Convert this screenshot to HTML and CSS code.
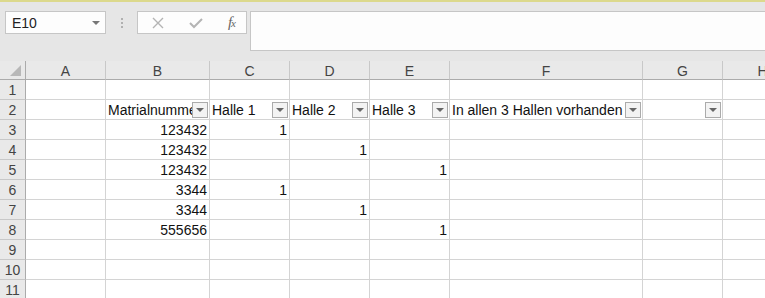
FILE: index.html
```html
<!DOCTYPE html>
<html lang="de">
<head>
  <meta charset="UTF-8">
  <title>Mappe1 - Excel</title>
  <link rel="stylesheet" href="styles.css">
</head>
<body>

  <!-- Formula bar -->
  <div class="toolbar">
    <div class="name-box">
      <span>E10</span>
      <span class="caret"></span>
    </div>
    <div class="grip"><i></i><i></i><i></i></div>
    <div class="fx-buttons">
      <svg width="14" height="14" viewBox="0 0 14 14"><path d="M2 2 L12 12 M12 2 L2 12" stroke="#b4b4b4" stroke-width="1.4" fill="none"/></svg>
      <svg width="16" height="14" viewBox="0 0 16 14"><path d="M2 7 L6 11 L14 3" stroke="#b4b4b4" stroke-width="2" fill="none"/></svg>
      <span class="fx">f<small>x</small></span>
    </div>
    <div class="formula"></div>
  </div>

  <!-- Sheet -->
  <div class="sheet">
    <div class="corner"><span class="tri"></span></div>
    <div class="colhead">A</div>
    <div class="colhead">B</div>
    <div class="colhead">C</div>
    <div class="colhead">D</div>
    <div class="colhead">E</div>
    <div class="colhead">F</div>
    <div class="colhead">G</div>
    <div class="colhead">H</div>

    <div class="rowhead">1</div>
    <div class="cell"></div><div class="cell"></div><div class="cell"></div><div class="cell"></div><div class="cell"></div><div class="cell"></div><div class="cell"></div><div class="cell"></div>

    <div class="rowhead">2</div>
    <div class="cell"></div>
    <div class="cell filter">Matrialnummer<span class="drop"></span></div>
    <div class="cell filter">Halle 1<span class="drop"></span></div>
    <div class="cell filter">Halle 2<span class="drop"></span></div>
    <div class="cell filter">Halle 3<span class="drop"></span></div>
    <div class="cell filter">In allen 3 Hallen vorhanden<span class="drop"></span></div>
    <div class="cell filter"><span class="drop"></span></div>
    <div class="cell"></div>

    <div class="rowhead">3</div>
    <div class="cell"></div><div class="cell num">123432</div><div class="cell num">1</div><div class="cell"></div><div class="cell"></div><div class="cell"></div><div class="cell"></div><div class="cell"></div>

    <div class="rowhead">4</div>
    <div class="cell"></div><div class="cell num">123432</div><div class="cell"></div><div class="cell num">1</div><div class="cell"></div><div class="cell"></div><div class="cell"></div><div class="cell"></div>

    <div class="rowhead">5</div>
    <div class="cell"></div><div class="cell num">123432</div><div class="cell"></div><div class="cell"></div><div class="cell num">1</div><div class="cell"></div><div class="cell"></div><div class="cell"></div>

    <div class="rowhead">6</div>
    <div class="cell"></div><div class="cell num">3344</div><div class="cell num">1</div><div class="cell"></div><div class="cell"></div><div class="cell"></div><div class="cell"></div><div class="cell"></div>

    <div class="rowhead">7</div>
    <div class="cell"></div><div class="cell num">3344</div><div class="cell"></div><div class="cell num">1</div><div class="cell"></div><div class="cell"></div><div class="cell"></div><div class="cell"></div>

    <div class="rowhead">8</div>
    <div class="cell"></div><div class="cell num">555656</div><div class="cell"></div><div class="cell"></div><div class="cell num">1</div><div class="cell"></div><div class="cell"></div><div class="cell"></div>

    <div class="rowhead">9</div>
    <div class="cell"></div><div class="cell"></div><div class="cell"></div><div class="cell"></div><div class="cell"></div><div class="cell"></div><div class="cell"></div><div class="cell"></div>

    <div class="rowhead">10</div>
    <div class="cell"></div><div class="cell"></div><div class="cell"></div><div class="cell"></div><div class="cell"></div><div class="cell"></div><div class="cell"></div><div class="cell"></div>

    <div class="rowhead">11</div>
    <div class="cell"></div><div class="cell"></div><div class="cell"></div><div class="cell"></div><div class="cell"></div><div class="cell"></div><div class="cell"></div><div class="cell"></div>
  </div>

</body>
</html>
```

FILE: styles.css
```css
body {
  margin: 0;
  font-family: "Liberation Sans", Arial, sans-serif;
  background: #ffffff;
  overflow: hidden;
}
.toolbar {
  height: 61px;
  box-sizing: border-box;
  background: #e6e6e6;
  border-top: 2px solid #dcd98c;
  display: flex;
  align-items: flex-start;
  padding: 9px 0 0 5px;
}
.name-box {
  width: 101px;
  height: 23px;
  box-sizing: border-box;
  background: #fdfdfd;
  border: 1px solid #c6c6c6;
  display: flex;
  align-items: center;
  justify-content: space-between;
  padding: 0 5px 0 6px;
  font-size: 14px;
  color: #222;
}
.caret {
  width: 0;
  height: 0;
  border-left: 4px solid transparent;
  border-right: 4px solid transparent;
  border-top: 4px solid #777;
  margin-top: 1px;
}
.grip {
  width: 31px;
  height: 23px;
  display: flex;
  flex-direction: column;
  align-items: center;
  justify-content: center;
  gap: 2px;
}
.grip i {
  width: 2px;
  height: 2px;
  background: #b0b0b0;
}
.fx-buttons {
  width: 110px;
  height: 23px;
  box-sizing: border-box;
  background: #fdfdfd;
  border: 1px solid #c6c6c6;
  display: flex;
  align-items: center;
  justify-content: space-between;
  padding: 0 11px 0 13px;
}
.fx {
  font-family: "Liberation Serif", serif;
  font-style: italic;
  font-size: 15px;
  color: #666;
  letter-spacing: -1px;
}
.fx small {
  font-size: 11px;
}
.formula {
  flex: 1;
  height: 40px;
  box-sizing: border-box;
  margin-left: 3px;
  background: #fdfdfd;
  border: 1px solid #c6c6c6;
  border-right: none;
}
.sheet {
  display: grid;
  grid-template-columns: 26px 80px 104px 80px 80px 80px 193px 80px 80px;
  grid-template-rows: 19px repeat(11, 20px);
  font-size: 14px;
  color: #111;
}
.corner, .colhead {
  background: #e9e9e9;
  border-bottom: 1px solid #ababab;
  border-right: 1px solid #c8c8c8;
  box-sizing: border-box;
}
.corner {
  position: relative;
  border-right-color: #ababab;
}
.tri {
  position: absolute;
  right: 4px;
  bottom: 3px;
  width: 0;
  height: 0;
  border-left: 11px solid transparent;
  border-bottom: 11px solid #b8b8b8;
}
.colhead {
  display: flex;
  align-items: center;
  justify-content: center;
  color: #444;
  padding-top: 1px;
}
.rowhead {
  background: #e9e9e9;
  border-right: 1px solid #ababab;
  border-bottom: 1px solid #c8c8c8;
  box-sizing: border-box;
  display: flex;
  align-items: center;
  justify-content: center;
  color: #444;
}
.cell {
  border-right: 1px solid #d4d4d4;
  border-bottom: 1px solid #d4d4d4;
  box-sizing: border-box;
  display: flex;
  align-items: flex-end;
  padding: 0 2px 1px 2px;
  white-space: nowrap;
  overflow: hidden;
}
.num {
  justify-content: flex-end;
}
.filter {
  position: relative;
}
.drop {
  position: absolute;
  right: 1px;
  top: 2px;
  width: 16px;
  height: 16px;
  box-sizing: border-box;
  background: #f3f3f3;
  border: 1px solid #ababab;
}
.drop::after {
  content: "";
  position: absolute;
  left: 3px;
  top: 5px;
  border-left: 4px solid transparent;
  border-right: 4px solid transparent;
  border-top: 4px solid #666;
}
```
